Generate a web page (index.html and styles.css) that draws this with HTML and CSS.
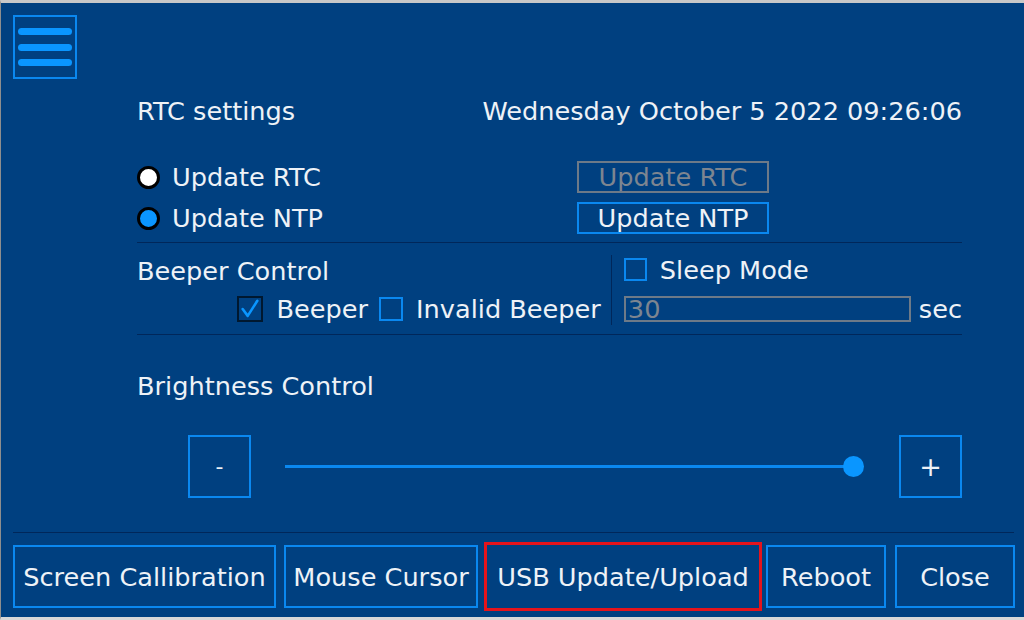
FILE: index.html
```html
<!DOCTYPE html>
<html>
<head>
<meta charset="utf-8">
<link rel="stylesheet" href="styles.css">
</head>
<body>
<div class="screen">
  <header class="top">
    <button class="menu" aria-label="Menu"><span class="bar"></span><span class="bar"></span><span class="bar"></span></button>
  </header>
  <main class="panel">
    <div class="title-row"><span>RTC settings</span><span>Wednesday October 5 2022 09:26:06</span></div>
    <div class="rtc">
      <label class="radio"><span class="dot"></span>Update RTC</label>
      <button class="btn btn-disabled">Update RTC</button>
      <label class="radio"><span class="dot dot-on"></span>Update NTP</label>
      <button class="btn">Update NTP</button>
    </div>
    <div class="divider divider-first"></div>
    <div class="beeper">
      <div class="beeper-left">
        <div class="label">Beeper Control</div>
        <div class="checks">
          <span class="box box-checked"><svg viewBox="0 0 24 24" width="24" height="24"><path d="M4 12 L9.5 19.5 L20 3" fill="none" stroke="#0a96ff" stroke-width="2.8" stroke-linecap="round" stroke-linejoin="round"/></svg></span>
          <span class="check-text">Beeper</span>
          <span class="box"></span>
          <span class="check-text">Invalid Beeper</span>
        </div>
      </div>
      <div class="vsep"></div>
      <div class="beeper-right">
        <div class="sleep"><span class="box"></span><span class="check-text">Sleep Mode</span></div>
        <div class="timeout"><span class="field">30</span><span>sec</span></div>
      </div>
    </div>
    <div class="divider"></div>
    <div class="label bright-label">Brightness Control</div>
    <div class="slider-row">
      <button class="sq">-</button>
      <div class="track"><span class="knob"></span></div>
      <button class="sq sq-plus">+</button>
    </div>
  </main>
  <div class="foot-line"></div>
  <footer class="actions">
    <button class="act act-screen">Screen Callibration</button>
    <button class="act act-mouse">Mouse Cursor</button>
    <button class="act act-usb">USB Update/Upload</button>
    <button class="act act-reboot">Reboot</button>
    <button class="act act-close">Close</button>
  </footer>
</div>
</body>
</html>
```
FILE: styles.css
```css
* { box-sizing: border-box; }
html, body { margin: 0; padding: 0; background: #d4d4d4; }
body { font-family: "DejaVu Sans", sans-serif; font-size: 25.6px; color: #eef2f7; }

.screen {
  width: 1024px;
  height: 620px;
  background: #004080;
  border-top: 3px solid #c8c8c8;
  border-left: 1px solid #8e8e8e;
  border-bottom: 3px solid #d8d8d8;
  display: flex;
  flex-direction: column;
  overflow: hidden;
}

.top { padding: 12px 0 0 12px; height: 76px; }
.menu {
  width: 64px; height: 64px;
  border: 2px solid #0a88f0;
  background: transparent;
  padding: 0;
  display: flex; flex-direction: column; align-items: center; justify-content: center;
  gap: 8.5px;
}
.bar { display: block; width: 54px; height: 7px; border-radius: 4px; background: #0a96ff; }

.panel { padding: 0 62px 0 136px; display: flex; flex-direction: column; }

.title-row {
  margin-top: 17px; height: 30px; line-height: 30px;
  display: flex; justify-content: space-between;
}

.rtc {
  margin-top: 35px;
  display: grid;
  grid-template-columns: 440px 192px;
  grid-auto-rows: 32px;
  row-gap: 9px;
}
.radio { display: flex; align-items: center; gap: 12px; line-height: 32px; }
.dot {
  width: 23px; height: 23px; border-radius: 50%;
  border: 3px solid #000; background: #fff; flex: none;
}
.dot-on { background: #0a96ff; }

.btn {
  font: inherit; color: #eef2f7;
  background: transparent;
  border: 2px solid #0a88f0;
  padding: 0; height: 32px; line-height: 28px;
}
.btn-disabled { border-color: #6d7a88; color: #7d8590; }

.divider { height: 1px; background: #00275a; }
.divider-first { margin-top: 8px; }

.beeper { display: flex; height: 91px; }
.beeper-left { width: 476px; display: flex; flex-direction: column; }
.label { height: 30px; line-height: 30px; }
.beeper-left .label { margin-top: 13px; }
.checks {
  margin-top: 10px; height: 26px;
  display: flex; align-items: center; justify-content: flex-end;
  padding-right: 10px;
}
.box {
  width: 24px; height: 24px; border: 2px solid #0a88f0; flex: none;
  display: flex; align-items: center; justify-content: center;
}
.box-checked { width: 26px; height: 26px; border-color: #00182f; margin-left: 2px; }
.box-checked svg { width: 22px; height: 22px; }
.check-text { margin-left: 13px; margin-right: 11px; line-height: 26px; }
.checks .check-text:last-child { margin-right: 0; }
.vsep { width: 1px; background: #00275a; margin: 12px 0 9px; }
.beeper-right { flex: 1; padding-left: 12px; display: flex; flex-direction: column; }
.sleep { margin-top: 15px; height: 23px; display: flex; align-items: center; }
.sleep .box { width: 23px; height: 23px; }
.timeout { margin-top: 15px; height: 26px; display: flex; align-items: center; gap: 8px; line-height: 26px; }
.field {
  width: 287px; height: 26px; border: 2px solid #6d7a88;
  color: #7d8590; line-height: 22px; padding-left: 2px;
}

.divider + .bright-label { margin-top: 36px; }

.slider-row { margin-top: 34px; height: 63px; display: flex; align-items: center; }
.sq {
  width: 63px; height: 63px; margin-left: 51px;
  font: inherit; font-size: 22px; color: #eef2f7;
  background: transparent; border: 2px solid #0a88f0; padding: 0;
}
.sq-plus { margin-left: 45px; font-size: 27px; }
.track { flex: 1; height: 3px; background: #0a88f0; margin-left: 34px; position: relative; }
.knob {
  position: absolute; right: -10px; top: -9px;
  width: 21px; height: 21px; border-radius: 50%; background: #0a96ff;
}

.foot-line { height: 1px; background: #00275a; margin: 34px 10px 0 12px; }

.actions { margin-top: 12px; padding-left: 12px; height: 63px; display: flex; align-items: center; }
.act {
  font: inherit; color: #eef2f7;
  background: transparent; border: 2px solid #0a88f0;
  height: 63px; padding: 0;
}
.act-screen { width: 263px; }
.act-mouse { width: 194px; margin-left: 8px; }
.act-usb { width: 278px; height: 69px; margin-left: 6px; border: 3px solid #e5141c; }
.act-reboot { width: 120px; margin-left: 4px; }
.act-close { width: 120px; margin-left: 9px; }
```
